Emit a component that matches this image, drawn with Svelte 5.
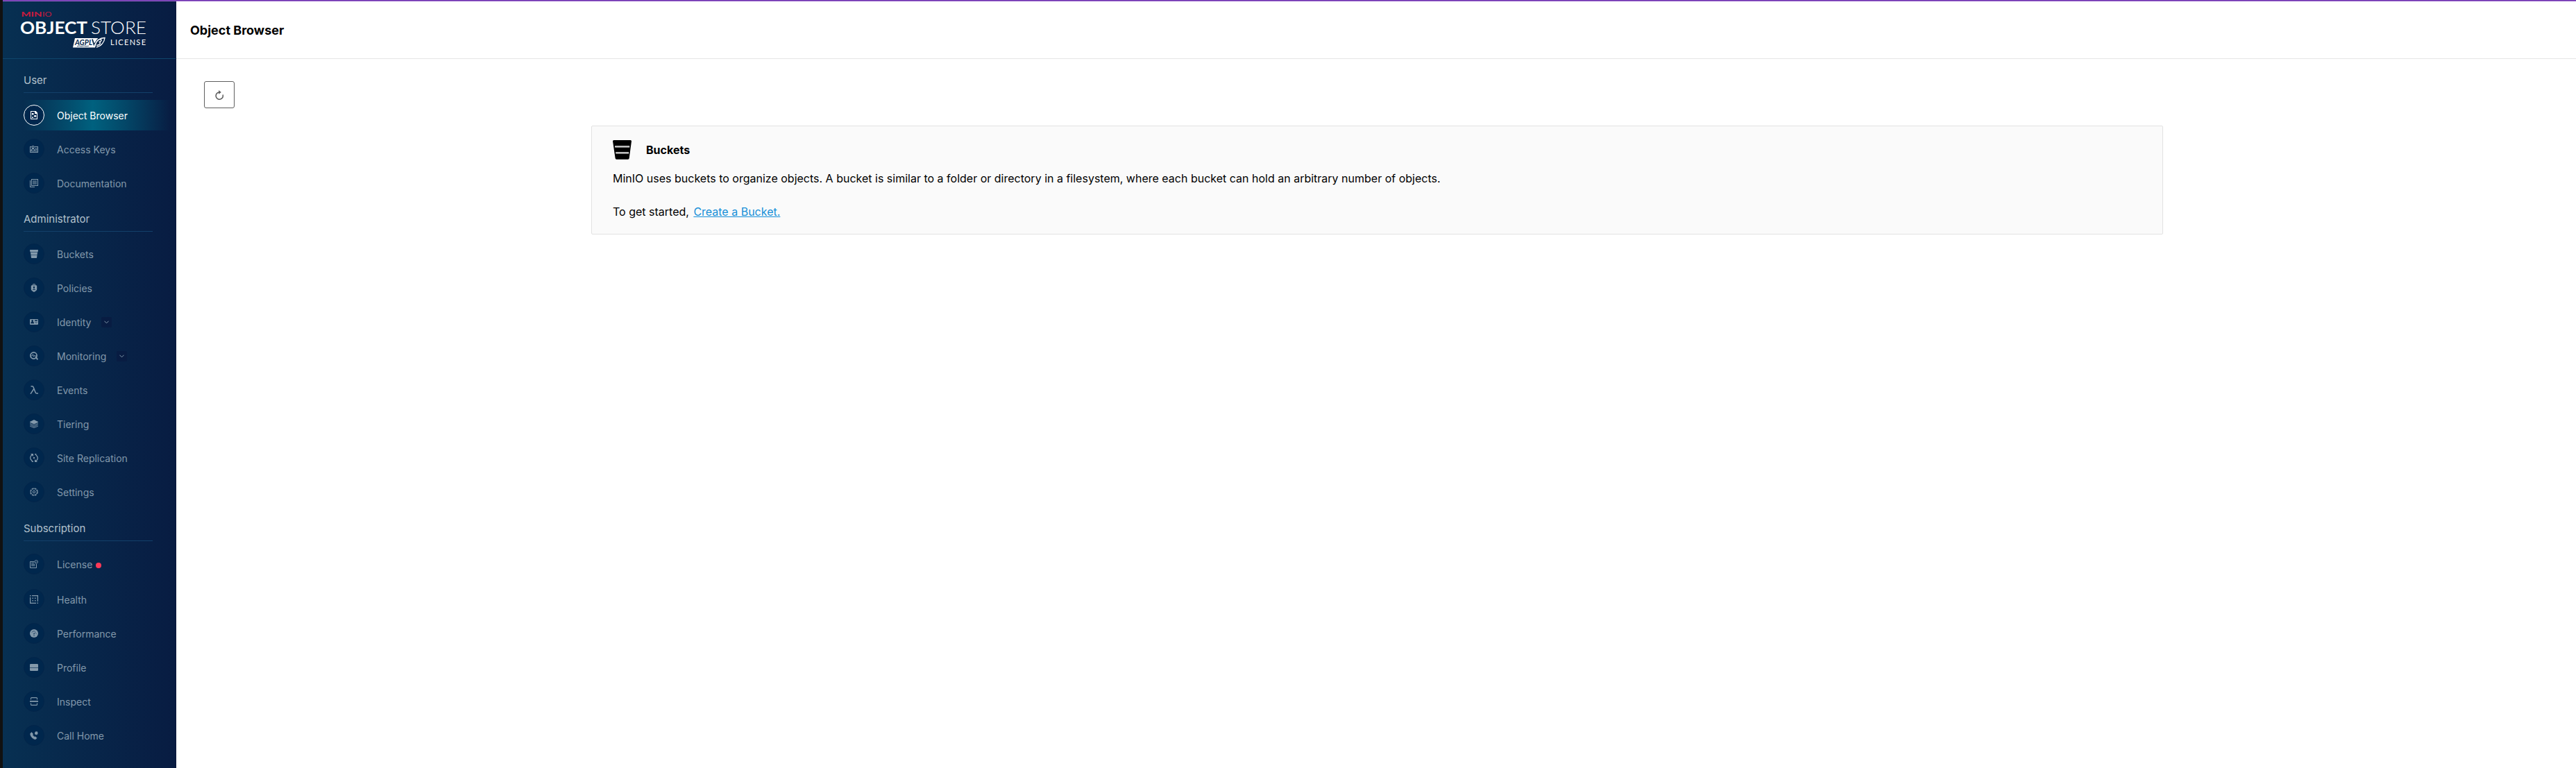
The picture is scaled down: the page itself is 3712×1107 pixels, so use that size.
<script>
  const sections = [
    {
      title: 'User',
      key: 'user',
      items: [
        { label: 'Object Browser', icon: 'browser', active: true },
        { label: 'Access Keys', icon: 'keys' },
        { label: 'Documentation', icon: 'docs' }
      ]
    },
    {
      title: 'Administrator',
      key: 'admin',
      items: [
        { label: 'Buckets', icon: 'bucket' },
        { label: 'Policies', icon: 'policy' },
        { label: 'Identity', icon: 'identity', expand: true },
        { label: 'Monitoring', icon: 'monitor', expand: true },
        { label: 'Events', icon: 'lambda' },
        { label: 'Tiering', icon: 'tier' },
        { label: 'Site Replication', icon: 'replicate' },
        { label: 'Settings', icon: 'settings' }
      ]
    },
    {
      title: 'Subscription',
      key: 'sub',
      items: [
        { label: 'License', icon: 'license', badge: true },
        { label: 'Health', icon: 'health' },
        { label: 'Performance', icon: 'performance' },
        { label: 'Profile', icon: 'profile' },
        { label: 'Inspect', icon: 'inspect' },
        { label: 'Call Home', icon: 'call' }
      ]
    }
  ];
</script>

{#snippet glyph(name)}
  <svg class="glyph" viewBox="0 0 12 12" fill="currentColor" stroke="none">
    {#if name === 'browser'}
      <path fill-rule="evenodd" d="M1 0h7.600L11 2.400V12H1zM2 1v10h8V4H7V1z" />
      <path d="M8 1v2h2zM3 3h2.500v2.500H3zM3 8.500h2v1.500H3z" />
      <circle cx="7.600" cy="7.300" r="1.500" />
    {:else if name === 'keys'}
      <path fill-rule="evenodd" d="M0 2h2.600v1H1v7h10V3H6.800V2H12v9H0z" />
      <path fill-rule="evenodd" d="M4.600 1a2 2 0 0 1 1.200 3.700L7.500 7v2.300h-6V7l1.900-2.300A2 2 0 0 1 4.600 1zm0 1a1 1 0 1 0 0 2 1 1 0 0 0 0-2zm0 3.400L2.800 7.600v.7h3.600v-.7z" />
      <path d="M8 4h1v1.400H8zM9.500 4h1v1.400h-1zM8 6.100h2.500v1H8zM8 8h2.500v1.200H8z" />
    {:else if name === 'docs'}
      <path fill-rule="evenodd" d="M2 0h10v10H2zM3 1v8h8V1z" />
      <path d="M0 2h1v9h6v1H0zM4 2.500h6v.9H4zM4 4.500h6v.9H4zM4 6.500h6v.9H4z" />
    {:else if name === 'bucket'}
      <path d="M.5 0h11q.5 0 .5.500L11.600 3H.4L0 .5Q0 0 .5 0zM1 4h10l-.4 3H1.400zM1.500 8h9l-.5 3.400q-.1.600-.6.600H2.700q-.6 0-.7-.600z" />
      <path d="M.5 3h11v1H.8zM1.400 7h9.200v1H1.500z" opacity=".5" />
    {:else if name === 'policy'}
      <path fill-rule="evenodd" d="M3.800 2.200A2.200 2.200 0 0 1 6 0a2.200 2.200 0 0 1 2.200 2.200H9Q10.200 2.200 10.200 3.400V8Q10 9.800 6 12 2 9.800 1.800 8V3.400Q1.800 2.200 3 2.200zm1.100 0h2.200A1.100 1.100 0 0 0 6 1.100a1.100 1.100 0 0 0-1.100 1.100zM6 3.800a1.100 1.100 0 0 0-.7 2L5 6.900h2l-.3-1.100A1.100 1.100 0 0 0 6 3.800zM4.200 8v1.100h3.600V8z" />
    {:else if name === 'identity'}
      <path fill-rule="evenodd" d="M1 2h10q1 0 1 1v6q0 1-1 1H1q-1 0-1-1V3q0-1 1-1zm2.600 1a1.300 1.300 0 0 0-.8 2.300L1.300 7.300V8.300H6V7.300L4.500 5.300A1.300 1.300 0 0 0 3.600 3zM7 3.200v1.600h4V3.200zM7 6v.6h4V6zM8.800 7.400v1.400h.5V7.400z" />
    {:else if name === 'monitor'}
      <circle cx="5.500" cy="5.500" r="4.600" fill="none" stroke="currentColor" stroke-width="1.700" />
      <path d="m7.400 7.600 1.400-1 3.200 4-1.400 1.400z" />
      <path d="M2.200 5.800h1.200l1-2.200 1.300 3.600.9-2.200.8.900h3.200" fill="none" stroke="currentColor" stroke-width=".9" />
    {:else if name === 'lambda'}
      <path d="M1.500.8h2c1 0 1.300.4 1.700 1.400l2.700 7c.4 1.200.9 1.900 2 1.900H12M5.800 4.500 1 11.800" fill="none" stroke="currentColor" stroke-width="1.500" />
    {:else if name === 'tier'}
      <path d="M6 0 12 3v.8L6 6.500 0 3.800V3z" />
      <path d="M.2 5.300 6 8l5.800-2.700M.2 7.200 6 9.900l5.800-2.700M.2 9.200 6 11.600l5.800-2.400" fill="none" stroke="currentColor" stroke-width=".9" />
    {:else if name === 'replicate'}
      <path d="M4 1.200C.8 2.600 0 6 1.400 8.300L3.600 10.800M8 10.800c3.200-1.300 4-4.700 2.600-7L8.400 1.200" fill="none" stroke="currentColor" stroke-width="1.300" />
      <path d="M1 0h4v4L3.600 2.800zM11 12H7V8l1.400 1.200zM5 5h2v2H5zM6.700 0h3L8 1.900zM2.400 12h3L4 10.100z" />
    {:else if name === 'settings'}
      <circle cx="6" cy="6" r="5.200" fill="none" stroke="currentColor" stroke-width="1.200" stroke-dasharray="3 1.084" />
      <circle cx="6" cy="6" r="4.300" fill="none" stroke="currentColor" stroke-width=".7" />
      <circle cx="6" cy="6" r="1.700" fill="none" stroke="currentColor" stroke-width="1" />
    {:else if name === 'license'}
      <path d="M6.500 2.500h-6v9h9V6.500" fill="none" stroke="currentColor" />
      <path d="M2 4h4v.9H2zM2 6h5.500v.9H2zM2 8h5.500v.9H2zM9 6h1v3H9z" />
      <circle cx="9.200" cy="2.800" r="2.300" fill="none" stroke="currentColor" stroke-width=".9" />
      <path d="m8.200 2.800.8.800 1.300-1.500" fill="none" stroke="currentColor" stroke-width=".7" />
    {:else if name === 'health'}
      <path d="M3 .6h8.400V9M.6 3v8.400H9" fill="none" stroke="currentColor" stroke-width="1.200" />
      <path d="M0 0h1.500v1.500H0zM10.500 10.500H12V12h-1.500zM3.500 3.500H5V5H3.500zM7 3.500h1.500V5H7zM3.500 7H5v1.500H3.500zM7 7h1.500v1.500H7z" />
    {:else if name === 'performance'}
      <circle cx="6" cy="6" r="6" />
      <path class="cut" d="M2.900 4.600A3.400 3.400 0 0 1 7.800 3.300M8.600 4.500 6.300 6.200M5 9.300h2.200M9.300 6v.9" />
      <circle class="cut" cx="6" cy="6.600" r=".7" />
    {:else if name === 'profile'}
      <path d="M1.200 1h9.600q1.200 0 1.200 1.200V6H0V2.200Q0 1 1.200 1zM0 7h12v2.800q0 1.200-1.200 1.200H1.200Q0 11 0 9.800z" />
      <path d="M0 6h12v1H0z" opacity=".4" />
    {:else if name === 'inspect'}
      <path d="M1.500 3.500V1.600Q1.500.6 2.500.6h7q1 0 1 1v1.900M1.500 8.500v1.900q0 1 1 1h7q1 0 1-1V8.500" fill="none" stroke="currentColor" stroke-width="1.100" />
      <path d="M0 5h12v1.800H0z" />
    {:else if name === 'call'}
      <path d="M.8 3.200 2.600 1.600 4.600 4 4 5.400 6.600 8.300 8 7.700l2 2L8.500 11.600C5 12 0 7 .8 3.200z" stroke="currentColor" stroke-width=".6" stroke-linejoin="round" />
      <path d="m8.600 0 .8.600 1.300-.3.300 1.200.9.900-.7.900.1 1.200-1.300.2-1 .8-.9-1-1.200-.3.300-1.300-.3-1.200 1.200-.4z" />
    {/if}
  </svg>
{/snippet}

<div class="window">
  <div class="edge"></div>
  <div class="app">
    <aside class="sidebar">
      <div class="brand">
        <svg class="logo" width="182" height="56" viewBox="0 0 182 56">
          <text class="minio" x="0.500" y="7" textLength="30" lengthAdjust="spacingAndGlyphs">MIN</text>
          <text class="minio thin" x="31" y="7" textLength="13.500" lengthAdjust="spacingAndGlyphs">IO</text>
          <text class="object" x="-1" y="31.600" textLength="97" lengthAdjust="spacingAndGlyphs">OBJECT</text>
          <text class="store" x="101" y="31.600" textLength="80" lengthAdjust="spacingAndGlyphs">STORE</text>
          <path d="M78 38h33l-4 13.500H75z" fill="#fff" />
          <text class="agpl" x="78" y="47.500" textLength="25" lengthAdjust="spacingAndGlyphs">AGPL</text>
          <path d="m81 49.800 3-.7 3 .6 4-.6 3 .6 4-.5" fill="none" stroke="#08294c" stroke-width=".8" />
          <path d="m103 39.500 2.500 8L111 39.500" fill="none" stroke="#08294c" stroke-width="1.800" />
          <path d="M106 49c3-8 8-11.500 15-11.500-.5 6-5 12-12 13.500m1-9.500c3-2.300 8-2 5.500.7-1 1-2.200 1.200-3 1.200 3.500.5 2 4.300-3.500 5" fill="none" stroke="#fff" stroke-width="1.300" />
          <text class="lic" x="129" y="48" textLength="51" lengthAdjust="spacing">LICENSE</text>
        </svg>
      </div>
      <nav>
        {#each sections as section}
          <section class={section.key}>
            <h2>{section.title}</h2>
            <ul>
              {#each section.items as item}
                <li class:active={item.active} class:badged={item.badge}>
                  <span class="disc">{@render glyph(item.icon)}</span>
                  <span class="label">{item.label}</span>
                  {#if item.expand}
                    <span class="expand">
                      <svg width="7" height="5" viewBox="0 0 7 5"><path d="m.4.7 3.100 3.100L6.600.7" fill="none" stroke="currentColor" /></svg>
                    </span>
                  {/if}
                  {#if item.badge}<span class="dot"></span>{/if}
                </li>
              {/each}
            </ul>
          </section>
        {/each}
      </nav>
    </aside>
    <main>
      <header><h1>Object Browser</h1></header>
      <div class="content">
        <button aria-label="Refresh">
          <svg width="12" height="14" viewBox="0 0 12 14">
            <path d="M11.100 6.500A5.100 5.100 0 1 1 6 3h1" fill="none" stroke="#5e5e5e" stroke-width="1.600" />
            <path d="m5.200 0 3.600 3-3.600 2.800z" fill="#5e5e5e" />
          </svg>
        </button>
        <div class="card">
          <div class="card-title">
            <svg width="27" height="28" viewBox="0 0 27 28">
              <path d="M1.500 0h24Q27 0 27 1.500L23.700 26q-.2 1.700-1.700 1.700H5.300q-1.500 0-1.700-1.700L0 1.500Q0 0 1.500 0z" />
              <path d="M3 8.200h21.200v2.300H3.200zM4.200 17.300h18.900v2.200H4.400z" fill="#fafafa" />
              <path d="M3.500 9h20.500v.8H3.500zM4.500 18h18.300v.8H4.500z" fill="#aaa" />
            </svg>
            <h3>Buckets</h3>
          </div>
          <p>MinIO uses buckets to organize objects. A bucket is similar to a folder or directory in a filesystem, where each bucket can hold an arbitrary number of objects.</p>
          <p class="start">To get started, <a href="#create">Create a Bucket.</a></p>
        </div>
      </div>
    </main>
  </div>
</div>

<style>
  :global(body) {
    background: #fff;
    font-family: Inter, sans-serif;
  }
  h1, h2, h3, p, ul {
    margin: 0;
    padding: 0;
  }
  .window {
    display: flex;
    height: 1107px;
    overflow: hidden;
  }
  .edge {
    width: 4px;
    background: #111;
  }
  .app {
    flex: 1;
    display: flex;
    border-top: 1px solid #6d35ae;
    box-shadow: inset 0 1px #9a62cc;
    padding-top: 1px;
  }
  .sidebar {
    width: 250px;
    box-sizing: border-box;
    border-right: 1px solid #07163a;
    background: linear-gradient(90deg, #073052 0%, #081c42 100%);
  }
  .brand {
    height: 67px;
    border-bottom: 1px solid #0f456b;
    padding: 15px 0 0 26px;
  }
  .logo {
    display: block;
    overflow: visible;
  }
  .logo text {
    fill: #fff;
    font-family: Lato, sans-serif;
  }
  .logo .minio {
    fill: #c51b3f;
    font-size: 9.500px;
    font-weight: 900;
  }
  .logo .thin {
    font-weight: 400;
  }
  .logo .object {
    font-size: 24.500px;
    font-weight: 700;
  }
  .logo .store {
    font-size: 24.500px;
    font-weight: 300;
  }
  .logo .agpl {
    fill: #08294c;
    font-size: 11px;
    font-style: italic;
    font-weight: 700;
  }
  .logo .lic {
    font-size: 11px;
  }
  section {
    padding: 0 33px 0 30px;
  }
  h2 {
    font-size: 15px;
    line-height: 20px;
    font-weight: 400;
    color: #b2c1cc;
    border-bottom: 1px solid #13406a;
    padding-bottom: 7px;
    height: 20px;
  }
  .user h2 {
    margin-top: 21px;
  }
  .admin h2 {
    margin-top: 20px;
  }
  .sub h2 {
    margin-top: 21px;
  }
  ul {
    display: flex;
    flex-direction: column;
    gap: 5px;
    list-style: none;
    padding-top: 10px;
  }
  li {
    display: flex;
    align-items: center;
    height: 44px;
    margin-right: -26px;
    color: #8399ab;
    font-size: 14px;
  }
  .badged {
    height: 46px;
    margin-bottom: 1px;
  }
  li.active {
    color: #fff;
    background: linear-gradient(90deg, rgba(0, 97, 127, 0) 0%, #00617f 47%, rgba(0, 97, 127, 0) 100%);
  }
  .disc {
    display: grid;
    place-items: center;
    width: 28px;
    height: 28px;
    border: 1px solid #03254a;
    border-radius: 50%;
    background: #00274d;
    margin-right: 18px;
  }
  .active .disc {
    border-color: #fff;
  }
  .glyph {
    width: 12px;
    height: 12px;
  }
  .cut {
    fill: none;
    stroke: #00274d;
    stroke-width: 0.6;
  }
  .expand {
    display: grid;
    place-items: center;
    width: 15px;
    height: 15px;
    margin-left: 15px;
    border-radius: 2px;
    background: #081c42;
  }
  .dot {
    width: 8px;
    height: 8px;
    margin: 3px 0 0 5px;
    border-radius: 50%;
    background: #ff3958;
  }
  main {
    flex: 1;
  }
  header {
    display: flex;
    align-items: center;
    height: 82px;
    border-bottom: 1px solid #e5e5e5;
    padding-left: 20px;
  }
  h1 {
    font-size: 18px;
    font-weight: 700;
    color: #000;
  }
  .content {
    padding: 32px 40px 0;
  }
  button {
    display: grid;
    place-items: center;
    width: 44px;
    height: 39px;
    padding: 0;
    border: 1px solid #5e5e5e;
    border-radius: 3px;
    background: #fff;
  }
  .card {
    box-sizing: border-box;
    width: 2265px;
    height: 157px;
    margin: 25px 0 0 558px;
    padding: 20px 30px;
    border: 1px solid #e2e2e2;
    border-radius: 2px;
    background: #fafafa;
    color: #000;
    font-size: 16px;
    line-height: 24px;
  }
  .card-title {
    display: flex;
    align-items: center;
    height: 28px;
    margin-bottom: 15px;
  }
  h3 {
    margin-left: 21px;
    font-size: 16px;
    font-weight: 700;
  }
  .start {
    margin-top: 24px;
  }
  a {
    margin-left: 2px;
    color: #168fd8;
  }
</style>
